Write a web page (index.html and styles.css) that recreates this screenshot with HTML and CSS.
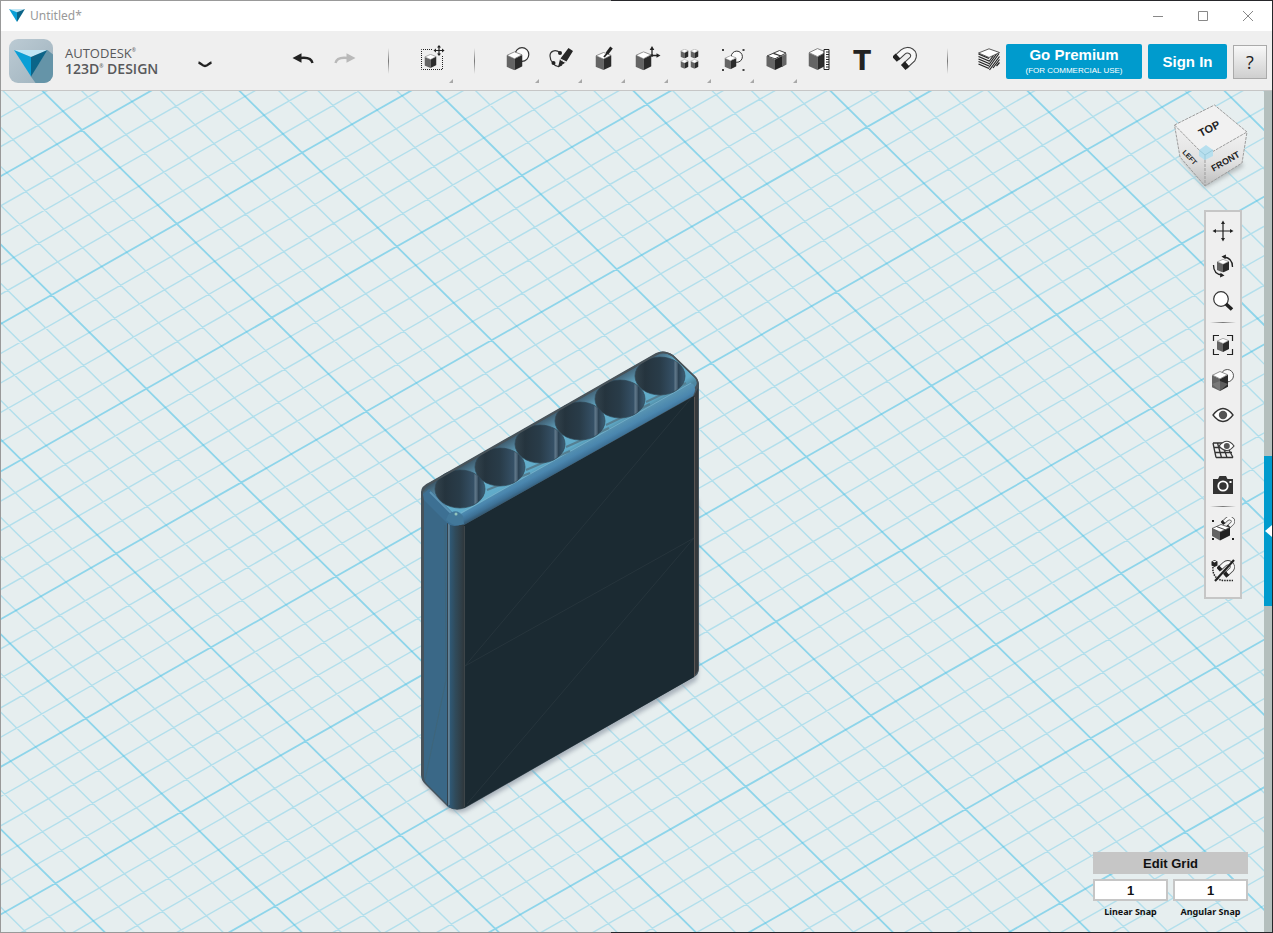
FILE: index.html
```
<!DOCTYPE html>
<html lang="en">
<head>
<meta charset="utf-8">
<meta name="viewport" content="width=device-width, initial-scale=1">
<title>Untitled*</title>
<link rel="stylesheet" href="styles.css">
</head>
<body>
<svg class="defs" aria-hidden="true">
  <symbol id="cube" viewBox="0 0 16 19" preserveAspectRatio="none">
    <path d="M0 4 8 7.500V19L0 15.500Z" fill="#646464"/>
    <path d="M16 3.500 8 7.500V19L16 15Z" fill="#2b2b2b"/>
    <path d="M.5 4 8 .5 15.500 3.500 8 7.500Z" fill="#fff" stroke="#666" stroke-width=".7"/>
  </symbol>
  <symbol id="gem" viewBox="0 0 48 39">
    <path d="M0 0H48L24 10Z" fill="#bfe6f5"/>
    <path d="M0 0 24 10V39Z" fill="#0a9fd6"/>
    <path d="M48 0 24 10V39Z" fill="#0b6488"/>
  </symbol>
  <symbol id="magnet" viewBox="-12 -13 24 24">
    <path d="M-8.500-1.500-2-7.500C3-12 11.500-7 7.500-.5L0 6.500" fill="none" stroke="#444" stroke-width="6.800"/>
    <path d="M-8-2-2-7.500C3-12 11.500-7 7.500-.5L.5 6" fill="none" stroke="#f8f8f8" stroke-width="4.700"/>
    <path d="M-10.500-.2-7-3.500M-1.800 8 2.200 4.400" stroke="#222" stroke-width="6.800"/>
  </symbol>
</svg>

<div class="window">
  <header class="titlebar">
    <svg class="title-gem" aria-hidden="true"><use href="#gem"/></svg>
    <span class="title">Untitled*</span>
    <div class="window-controls">
      <button aria-label="Minimize"><svg viewBox="0 0 12 12"><path d="M1 6.500H11"/></svg></button>
      <button aria-label="Maximize"><svg viewBox="0 0 12 12"><path d="M1.500 1.500H10.500V10.500H1.500Z"/></svg></button>
      <button aria-label="Close"><svg viewBox="0 0 12 12"><path d="M1 1 11 11M11 1 1 11"/></svg></button>
    </div>
  </header>

  <div class="toolbar">
    <div class="brand">
      <svg class="logo" viewBox="0 0 44 44" aria-hidden="true">
        <defs>
          <linearGradient id="tile" x1="0" y1="0" x2="1" y2="1"><stop offset="0" stop-color="#bccbd4"/><stop offset="1" stop-color="#9fb2bd"/></linearGradient>
          <clipPath id="tileclip"><rect width="44" height="44" rx="9"/></clipPath>
        </defs>
        <g clip-path="url(#tileclip)">
          <rect width="44" height="44" fill="url(#tile)"/>
          <path d="M38.500 11 46 17V46H28L21.500 37Z" fill="#6594a8"/>
          <path d="M5 11H38.500L22 18Z" fill="#bfe6f5"/>
          <path d="M5 11 22 18V37.500Z" fill="#0a9fd6"/>
          <path d="M38.500 11 22 18V37.500Z" fill="#0b6488"/>
        </g>
      </svg>
      <div class="wordmark">
        <span class="maker">AUTODESK<sup>®</sup></span>
        <span class="product">123D<sup>®</sup> DESIGN</span>
      </div>
      <button class="menu" aria-label="Main menu"><svg viewBox="0 0 16 22"><path d="M1.500 12.500C4 13 5 16 8 16S12 13 14.500 12.500" fill="none" stroke="#222" stroke-width="2.400"/></svg></button>
    </div>

    <div class="tools">
      <button class="tool" aria-label="Undo"><svg viewBox="-16 -16 32 32"><path d="M-10.500-2-1.500-6.700V2.700Z" fill="#222"/><path d="M-3-2C4-3 8.500-1.500 9.500 3" fill="none" stroke="#222" stroke-width="2.400"/></svg></button>
      <button class="tool" aria-label="Redo"><svg viewBox="-16 -16 32 32"><path d="M9.500-2 .5-6.700V2.700Z" fill="#b9b9b9"/><path d="M2-2C-5-3-9.500-1.500-10.500 3" fill="none" stroke="#b9b9b9" stroke-width="2.400"/></svg></button>
      <span class="divider"></span>
      <button class="tool more" aria-label="Transform"><svg viewBox="-16 -16 32 32">
        <path d="M0-10.500H-10.500V9.500H10.500V-4" fill="none" stroke="#222" stroke-dasharray="1 1"/>
        <use href="#cube" x="-7.500" y="-6" width="12" height="14"/>
        <path d="M7-14V-5M2.500-9.500H11.500" stroke="#222" stroke-width="1.200"/>
        <path d="M7-15 9-12.500H5ZM7-4 9-6.500H5ZM1.500-9.500 4-11.500V-7.500ZM12.500-9.500 10-11.500V-7.500Z" fill="#222"/></svg></button>
      <span class="divider"></span>
      <button class="tool more" aria-label="Primitives"><svg viewBox="-16 -16 32 32"><circle cx="4" cy="-5.500" r="6.800" fill="#fafafa" stroke="#333" stroke-width="1.200"/><use href="#cube" x="-11.500" y="-8.700" width="16" height="19"/></svg></button>
      <button class="tool more" aria-label="Sketch"><svg viewBox="-16 -16 32 32">
        <path d="M-1-7.500C-6-11-11-9-11-4-11-1-10 1-8 3-7 5-5 6-3 6.500L1 5" fill="none" stroke="#333" stroke-width="1.200"/>
        <circle cx="-1" cy="-7" r="2" fill="#222"/><circle cx="-7.500" cy="3" r="2" fill="#222"/>
        <path d="M7.500-12 12-9 5.500 1.500-.5-1.500ZM-1-1 4.500 2.500-3 7.500Z" fill="#262626"/><path d="M-.8-.5 4 2.300" stroke="#eee"/></svg></button>
      <button class="tool more" aria-label="Construct"><svg viewBox="-16 -16 32 32"><use href="#cube" x="-8.500" y="-8" width="16" height="18"/><path d="M7.500-12.500 3-6.500" stroke="#222" stroke-width="3.200"/><path d="M3.500-7 0-3" stroke="#222" stroke-width="1.800"/></svg></button>
      <button class="tool more" aria-label="Modify"><svg viewBox="-16 -16 32 32"><use href="#cube" x="-11.500" y="-8.700" width="16" height="19"/><path d="M5-11V-4.500H11" fill="none" stroke="#222" stroke-width="1.300"/><path d="M5-14 7.300-10H2.700ZM13.500-4.500 9.500-6.800V-2.200Z" fill="#222"/><circle cx="5" cy="-4.500" r="1.300" fill="#222"/></svg></button>
      <button class="tool more" aria-label="Pattern"><svg viewBox="-16 -16 32 32"><use href="#cube" x="-9.500" y="-11" width="8" height="9.500"/><use href="#cube" x=".5" y="-11" width="8" height="9.500"/><use href="#cube" x="-9.500" y="-.8" width="8" height="9.500"/><use href="#cube" x=".5" y="-.8" width="8" height="9.500"/></svg></button>
      <button class="tool more" aria-label="Grouping"><svg viewBox="-16 -16 32 32"><circle cx="3.800" cy="-3.300" r="5.600" fill="#fafafa" stroke="#333"/><use href="#cube" x="-8.500" y="-4.700" width="12" height="14"/><path d="M-11-11h2v2h-2ZM9.500-11h2v2h-2ZM-11 9h2v2h-2ZM9.500 9h2v2h-2Z" fill="#444"/></svg></button>
      <button class="tool more" aria-label="Combine"><svg viewBox="-16 -16 32 32">
        <path d="M-9.500-4-1-.5V10L-9.500 6Z" fill="#646464"/><path d="M-1-.5 7-4.500V6.200L-1 10Z" fill="#242424"/><path d="M6-4 10.500-6.500V4.500L6 7Z" fill="#666"/>
        <path d="M-9-4 3.500-9.500 10-7-1-1.200Z" fill="#fff" stroke="#444"/><path d="M-2.500-6.700 5-4" stroke="#333" stroke-width="1.300"/></svg></button>
      <button class="tool" aria-label="Measure"><svg viewBox="-16 -16 32 32"><use href="#cube" x="-10.500" y="-12" width="18" height="22"/><path d="M5-10.500h5v20h-5Z" fill="#fff" stroke="#222"/><path d="M7-8h3M7-5.500h3M7-3h3M7-.5h3M7 2h3M7 4.500h3M7 7h3" stroke="#222"/></svg></button>
      <button class="tool" aria-label="Text"><svg viewBox="-16 -16 32 32"><text x="0" y="10" class="glyph-t">T</text></svg></button>
      <button class="tool" aria-label="Snap"><svg viewBox="-16 -16 32 32"><use href="#magnet" x="-12" y="-13.500" width="24" height="24"/></svg></button>
      <span class="divider"></span>
    </div>

    <div class="actions">
      <button class="material" aria-label="Material"><svg viewBox="0 0 22 23">
        <path d="M.5 5.500 11 10V22L.5 17.500ZM21.500 4.500 11 10V22L21.500 16.500Z" fill="#eee"/>
        <path d="M.5 6 11 10.500M.5 8.500 11 13M.5 11 11 15.500M.5 13.500 11 18M.5 16 11 20.500" stroke="#222" stroke-width="1.300"/>
        <path d="M11 13.500 15.500 7.500M11 16.500 18.500 6M11 19.500 21 5.500M11.500 22 21.500 8.500M15 20 21.500 11.500M18.500 18 21.500 14.500" stroke="#222" stroke-width="1.200"/>
        <path d="M.5 5 11 .8 21.500 4.500 11 9.500Z" fill="#fff" stroke="#333" stroke-width=".8"/></svg></button>
      <button class="premium">Go Premium<small>(FOR COMMERCIAL USE)</small></button>
      <button class="signin">Sign In</button>
      <button class="help" aria-label="Help">?</button>
    </div>
  </div>

  <main class="workspace">
    <div class="stage">
      <svg class="scene" aria-label="3D view">
        <defs>
          <linearGradient id="bore"><stop offset="0" stop-color="#33434d"/><stop offset=".2" stop-color="#25343e"/><stop offset=".5" stop-color="#293c49"/><stop offset=".78" stop-color="#365167"/><stop offset=".8" stop-color="#61798b"/><stop offset=".84" stop-color="#4c6375"/><stop offset=".87" stop-color="#2c4253"/><stop offset="1" stop-color="#3d6077"/></linearGradient>
          <linearGradient id="corner"><stop offset="0" stop-color="#7ba0b5"/><stop offset=".12" stop-color="#2f5b7a"/><stop offset=".5" stop-color="#304a5a"/><stop offset="1" stop-color="#2f383d"/></linearGradient>
          <linearGradient id="fillet" gradientUnits="userSpaceOnUse" x1="570" y1="450" x2="578" y2="465"><stop offset="0" stop-color="#5793b2"/><stop offset=".4" stop-color="#4a86ae"/><stop offset=".7" stop-color="#3d7196"/><stop offset="1" stop-color="#304e63"/></linearGradient>
          <linearGradient id="deck" gradientUnits="userSpaceOnUse" x1="543" y1="418" x2="571" y2="465"><stop offset="0" stop-color="#3e596a"/><stop offset=".15" stop-color="#4f7c94"/><stop offset=".35" stop-color="#66b1cd"/><stop offset=".72" stop-color="#60abc9"/><stop offset=".85" stop-color="#4f879f"/><stop offset="1" stop-color="#4a87ad"/></linearGradient>
          <filter id="soft" x="-10%" y="-10%" width="120%" height="120%"><feGaussianBlur stdDeviation="2"/></filter>
        </defs>
        <path id="grid-minor" class="grid-minor"/>
        <path id="grid-major" class="grid-major"/>
        <g transform="translate(-1 -91)">
          <path d="M422 782 447 809Q456 815 466 811L696 681Q698 677 698 670V500H500Z" fill="#909aa6" opacity=".7" filter="url(#soft)"/>
          <path d="M421 492Q421 486 430 482L656 353Q664 349 673 355L695 376Q699 380 699 387V669Q699 674 694 677L465 808Q456 812 448 807L425 784Q421 780 421 775Z" fill="#45535c"/>
          <path d="M424 497 447 520V804L427 784Q424 781 424 777Z" fill="#3a6887"/>
          <path d="M447 518H464V808Q454 811 447 806Z" fill="url(#corner)"/>
          <path d="M464 525 694 396V677L464 808Z" fill="#1b2a32"/>
          <path d="M694 396 698 388V671L694 676Z" fill="#35393c"/>
          <path d="M694.500 397V676" stroke="#5b5654"/>
          <path d="M464.500 526V807" stroke="#3d4549"/>
          <path d="M447.500 522V806" stroke="#33424d"/>
          <path d="M449 524V805" stroke="#8299a6"/>
          <path d="M465 666 694 538M467 804 694 538M465 666 692 397" stroke="#2a373f" fill="none" stroke-width=".8"/>
          <path d="M445 525 446 680 425 780" stroke="#416474" fill="none" stroke-width=".7"/>
          <path d="M423 493Q423 488 431 484L657 355Q664 351 672 356L694 377Q699 382 695 387L464 522Q455 526 448 520L425 498Z" fill="url(#deck)"/>
          <path d="M423 494 429 489 453 513 462 524Q452 529 445 521L424 500Z" fill="#3d7093"/>
          <path d="M430 492 451 513" stroke="#5c93b3" stroke-width="2"/>
          <path d="M459 515 691 383Q698 387 693 396L464 525Q457 524 459 515Z" fill="url(#fillet)"/>
          <path d="M461 513 691 383" stroke="#79b2cd" stroke-width=".8"/>
          <path d="M487 490 530 473M526 470 570 451M566 447 609 428M606 425 650 404M646 402 686 383" stroke="#557f92" stroke-width="2"/>
          <path d="M448 515Q456 507 463 516L464 524Q455 528 446 520Z" fill="#42789a"/><circle cx="456" cy="514" r="1.500" fill="#93c4bd"/>
          <g fill="url(#bore)" stroke="#2f4654" stroke-width=".7">
            <ellipse cx="660" cy="376" rx="25" ry="19"/><ellipse cx="620" cy="399" rx="25" ry="19"/><ellipse cx="580" cy="421" rx="25" ry="19"/><ellipse cx="540" cy="444" rx="25" ry="19"/><ellipse cx="500" cy="467" rx="25" ry="19"/><ellipse cx="460" cy="489" rx="25" ry="19"/>
          </g>
          <path d="M422 497V775M423 491Q424 486 431 483L657 354Q664 350 673 356L695 377Q699 381 698 388" fill="none" stroke="#4a545a" stroke-width="1.600"/>
        </g>
      </svg>

      <svg class="viewcube" viewBox="1168 100 84 94" role="img" aria-label="View cube: top, left, front">
        <defs>
          <linearGradient id="face" x1="0" y1="0" x2="0" y2="1"><stop offset="0" stop-color="#f1f1f1"/><stop offset=".55" stop-color="#e2e2e2"/><stop offset="1" stop-color="#bdbdbd"/></linearGradient>
        </defs>
        <path d="M1180 158 1205 188 1244 166 1230 150Z" fill="#8b9294" opacity=".55" filter="url(#soft)"/>
        <path d="M1174.500 125 1205 156V186L1180 157Z" fill="url(#face)"/>
        <path d="M1247 132 1205 156V186L1242 163Z" fill="url(#face)"/>
        <path d="M1174.500 125 1214.500 105 1247 132 1205 156Z" fill="#f1f1f1"/>
        <path d="M1174.500 125 1214.500 105 1247 132 1242 163 1205 186 1180 157ZM1174.500 125 1205 156 1247 132M1205 156V186" fill="none" stroke="#9d9d9d" stroke-dasharray="3 1"/>
        <path d="M1199 150 1206 145 1213 150V156L1205 160 1199 156Z" fill="#b7dfee"/><path d="M1199 150 1205 155 1213 150M1205 155V160" fill="none" stroke="#9bcbdc"/>
        <text class="cube-label label-top" transform="translate(1211 132) rotate(-28)">TOP</text>
        <text class="cube-label label-front" transform="translate(1227 164) rotate(-30)">FRONT</text>
        <text class="cube-label label-left" transform="translate(1188 159) rotate(46)">LEFT</text>
      </svg>

      <nav class="navbar" aria-label="View navigation">
        <button aria-label="Pan"><svg viewBox="-12 -12 24 24"><path d="M0-8V8M-8 0H8" stroke="#222" stroke-width="1.200"/><path d="M0-10.500 2-7H-2ZM0 10.500 2 7H-2ZM-10.500 0-7-2V2ZM10.500 0 7-2V2Z" fill="#222"/></svg></button>
        <button aria-label="Orbit"><svg viewBox="-12 -12 24 24"><use href="#cube" x="-6" y="-7" width="12" height="13.500"/><path d="M1-9C6-8.500 9.500-5 9.500 1M-1 9C-6 8.500-9.500 5-9.500-1" fill="none" stroke="#222" stroke-width="1.300"/><path d="M-1.500-9.500 3-11.500 2.500-6.800ZM1.500 9.500-3 11.500-2.500 6.800Z" fill="#222"/></svg></button>
        <button aria-label="Zoom"><svg viewBox="-12 -12 24 24"><circle cx="-2" cy="-2" r="7.300" fill="#fff" stroke="#333" stroke-width="1.200"/><path d="M3 3 9 8.500" stroke="#222" stroke-width="3.600"/></svg></button>
        <hr>
        <button aria-label="Fit"><svg viewBox="-12 -12 24 24"><path d="M-9.500-4V-9.500H-4M4-9.500H9.500V-4M9.500 4V9.500H4M-4 9.500H-9.500V4" fill="none" stroke="#222" stroke-width="1.200"/><use href="#cube" x="-6" y="-7" width="12" height="14"/></svg></button>
        <button aria-label="Materials and outlines"><svg viewBox="-12 -12 24 24"><circle cx="4.300" cy="-4.300" r="6.200" fill="#fafafa" stroke="#555"/><use href="#cube" x="-11" y="-9" width="16" height="20"/><path d="M-11 4-3 1 5 4-3 11Z" fill="#888" opacity=".55"/></svg></button>
        <button aria-label="Show and hide"><svg viewBox="-12 -12 24 24"><path d="M-10 0Q0-13 10 0Q0 13-10 0Z" fill="#fff" stroke="#333" stroke-width="1.300"/><circle r="4.200" fill="#555"/></svg></button>
        <button aria-label="Grid visibility"><svg viewBox="-12 -12 24 24"><path d="M-10-7H4M-9-2.500H7M-8 2.500H9M-7 7.500H10M-10-7-7 7.500M-5.500-7-1.500 7.500M-1-7 4 7.500M4-4 10 7.500" fill="none" stroke="#333" stroke-width="1.300"/><path d="M-4-4Q4-13.500 11-4Q4 5-4-4Z" fill="#fff" stroke="#444" stroke-width="1.200"/><circle cx="3.800" cy="-4" r="3" fill="#555"/></svg></button>
        <button aria-label="Screenshot"><svg viewBox="-12 -12 24 24"><path d="M-10-6H-5L-3.500-9H3L4.500-6H10V9H-10Z" fill="#333"/><circle cy="1" r="4.700" fill="none" stroke="#fff" stroke-width="1.800"/><path d="M6.500-4h2v2h-2Z" fill="#fff"/></svg></button>
        <hr>
        <button aria-label="Snap while moving"><svg viewBox="-12 -12 24 24"><use href="#magnet" x="-2" y="-13" width="14" height="14"/><path d="M-11-.5-3 3V11.500L-11 7Z" fill="#646464"/><path d="M-3 3 7-1.500V6.500L-3 11.500Z" fill="#222"/><path d="M-11-.5-2-4.500 7-1.500-3 3Z" fill="#fff" stroke="#444" stroke-width=".8"/><path d="M-6.500-2.500 2 .7" stroke="#444"/><path d="M-11-9h2v2h-2ZM-11 9h2v2h-2ZM9 9h2v2h-2Z" fill="#222"/></svg></button>
        <button class="tall" aria-label="Sketch snap off"><svg viewBox="-12 -12 24 24"><path d="M-10-4C-11 4-6 9.500 1 9.500H10" fill="none" stroke="#222" stroke-width="1.500" stroke-dasharray="1.500 1"/><path d="M-11.500-9.500-8.500-11-5.500-9.500V-5.500L-8.500-4-11.500-5.500Z" fill="#222"/><path d="M-10.500-9.500-8.500-10.300-6.500-9.500-8.500-8.500Z" fill="#fff"/><use href="#magnet" x="-6" y="-11" width="18" height="18"/><path d="M-8 10 11-11" stroke="#222" stroke-width="2.200"/></svg></button>
      </nav>

      <form class="grid-panel">
        <button type="button" class="edit-grid">Edit Grid</button>
        <div class="snap"><input id="linear" type="text" value="1"><label for="linear">Linear Snap</label></div>
        <div class="snap"><input id="angular" type="text" value="1"><label for="angular">Angular Snap</label></div>
      </form>
    </div>
    <aside class="drawer">
      <button class="drawer-tab" aria-label="Open parts library"><svg viewBox="0 0 8 12"><path d="M8 0V12L1 6Z" fill="#fff"/></svg></button>
    </aside>
  </main>
</div>
<script src="grid.js"></script>
</body>
</html>
```
FILE: styles.css
```
* { box-sizing: border-box; }
body { margin: 0; font-family: "Liberation Sans", Arial, sans-serif; color: #111; }
button { border: 0; padding: 0; background: none; font: inherit; color: inherit; display: flex; align-items: center; justify-content: center; }
svg { display: block; flex: none; }
.defs { position: absolute; width: 0; height: 0; }

.window { height: 100vh; min-height: 720px; min-width: 1180px; padding: 1px; display: flex; flex-direction: column; background: linear-gradient(to right, #999 48%, #26262a 48%); }

.titlebar { flex: none; height: 30px; background: #fff; display: flex; align-items: center; padding-left: 8px; padding-bottom: 1px; }
.title-gem { width: 16px; height: 13px; }
.title { margin-left: 5px; font: 12px/16px "Noto Sans", sans-serif; color: #999; }
.window-controls { margin-left: auto; margin-right: 2px; display: flex; }
.window-controls button { width: 45px; height: 29px; }
.window-controls svg { width: 12px; height: 12px; fill: none; stroke: #888; }

.toolbar { flex: none; height: 60px; background: #efefef; border-bottom: 1px solid #c6c6c6; display: flex; align-items: center; padding: 0 5px 0 8px; }
.brand { flex: 1; display: flex; align-items: center; }
.logo { width: 44px; height: 44px; }
.wordmark { margin-left: 12px; display: flex; flex-direction: column; font-family: "Open Sans", sans-serif; color: #58595b; white-space: nowrap; }
.wordmark span { line-height: 16px; }
.maker { font-size: 13px; }
.product { font-size: 14px; font-weight: 600; }
.wordmark sup { font-size: 5px; line-height: 0; vertical-align: 6px; }
.menu { margin-left: 39px; }
.menu svg { width: 16px; height: 22px; }
.tools { flex: none; display: flex; height: 59px; }
.tool { position: relative; width: 43px; height: 100%; padding-bottom: 2px; }
.tool svg { width: 32px; height: 32px; }
.more::after { content: ""; position: absolute; right: 0; bottom: 7px; border: 2px solid #a8a8a8; border-top-color: transparent; border-left-color: transparent; }
.glyph-t { font: bold 26px "DejaVu Sans", sans-serif; text-anchor: middle; fill: #222; }
.divider { width: 43px; background: linear-gradient(transparent, #777 50%, transparent) center / 1px 26px no-repeat; }

.actions { flex: none; display: flex; align-items: center; gap: 6px; margin-left: 9px; padding-top: 2px; font-weight: bold; font-size: 15px; }
.material { padding-bottom: 4px; }
.material svg { width: 22px; height: 23px; }
.premium, .signin { height: 35px; border-radius: 2px; background: #009bcd; color: #fff; }
.premium { width: 136px; flex-direction: column; line-height: 18px; }
.premium small { font-weight: normal; font-size: 8px; line-height: 14px; }
.signin { width: 79px; }
.help { width: 34px; height: 34px; border: 1px solid #aaa; background: linear-gradient(#f8f8f8, #cfcfcf); font: 18px "Open Sans", sans-serif; color: #222; }

.workspace { flex: 1; min-height: 0; display: flex; }
.stage { flex: 1; position: relative; overflow: hidden; background: #e6eeef; }
.scene { width: 100%; height: 100%; }
.grid-minor, .grid-major { fill: none; stroke: #3dbde6; }
.grid-minor { stroke-opacity: .3; stroke-width: 1.4; }
.grid-major { stroke-opacity: .52; stroke-width: 1.8; }

.viewcube { position: absolute; top: 9px; right: 12px; width: 84px; height: 94px; }
.cube-label { text-anchor: middle; font-weight: bold; fill: #222; }
.label-top { font-size: 11px; }
.label-front { font-size: 9px; }
.label-left { font-size: 7px; }

.navbar { position: absolute; top: 119px; right: 22px; width: 38px; padding: 1px 0 2px; border: 2px solid #c6c6c6; background: #efefef; }
.navbar button { width: 100%; height: 35px; }
.navbar .tall { height: 49px; }
.navbar svg { width: 24px; height: 24px; }
.navbar hr { margin: 4px; height: 1px; border: 0; background: linear-gradient(to right, transparent, #777, transparent); }

.grid-panel { position: absolute; right: 16px; bottom: 13px; width: 155px; display: grid; grid-template-columns: 1fr 1fr; gap: 5px; }
.edit-grid { grid-column: 1 / -1; height: 22px; background: #c6c6c6; font-size: 13px; font-weight: bold; }
.snap { display: flex; flex-direction: column; }
.snap input { width: 100%; height: 22px; border: 2px solid #c6c6c6; padding: 0; background: #fff; text-align: center; font: bold 13px "Liberation Sans", Arial, sans-serif; color: #111; }
.snap label { margin-top: 4px; text-align: center; font: bold 9px/14px "Noto Sans", sans-serif; white-space: nowrap; }

.drawer { flex: none; width: 8px; background: #b4bfbd; display: flex; flex-direction: column; justify-content: center; }
.drawer-tab { width: 8px; height: 150px; margin-top: 38px; background: #009bcd; }
.drawer-tab svg { width: 8px; height: 12px; }
```
FILE: grid.js
```
// Ground grid: two families of parallel lines, five cells to each major square.
const ORIGIN = { x: 81, y: 39 };
const U = { x: 125.15, y: -71.1 };
const V = { x: 94.8, y: 93.8 };
const REACH = 40;

const point = (u, v) =>
  (ORIGIN.x + u * U.x + v * V.x).toFixed(1) + " " + (ORIGIN.y + u * U.y + v * V.y).toFixed(1);

let minor = "";
let major = "";
for (let i = -REACH * 5; i <= REACH * 5; i++) {
  const k = i / 5;
  const lines = "M" + point(k, -REACH) + "L" + point(k, REACH) + "M" + point(-REACH, k) + "L" + point(REACH, k);
  if (i % 5 === 0) major += lines;
  else minor += lines;
}
document.getElementById("grid-minor").setAttribute("d", minor);
document.getElementById("grid-major").setAttribute("d", major);
```
